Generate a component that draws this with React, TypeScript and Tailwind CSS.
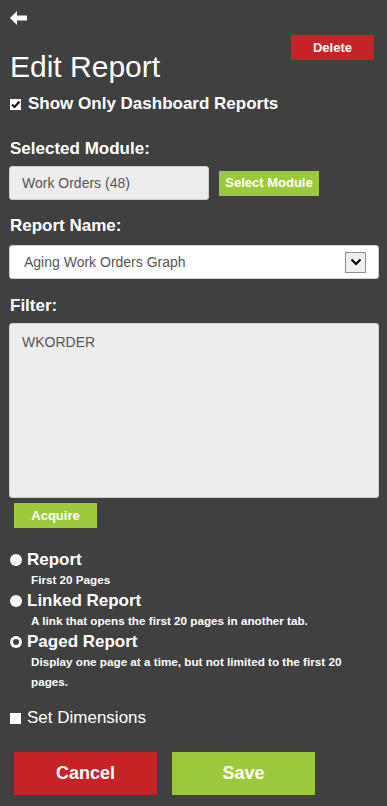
import React from "react";

const font = { fontFamily: '"Liberation Sans", Arial, sans-serif' };

const Check = ({ checked }: { checked?: boolean }) => (
  <span className="flex h-[11px] w-[11px] shrink-0 items-center justify-center bg-white">
    {checked && (
      <svg viewBox="0 0 11 11" className="h-[11px] w-[11px]">
        <path d="M2 5.5 L4.5 8 L9.5 2.5" fill="none" stroke="#111" strokeWidth="2" />
      </svg>
    )}
  </span>
);

const Radio = ({ hollow }: { hollow?: boolean }) => (
  <span className="flex h-[12px] w-[12px] shrink-0 items-center justify-center rounded-full bg-white">
    {hollow && <span className="h-[6px] w-[6px] rounded-full bg-[#404040]" />}
  </span>
);

const options = [
  { label: "Report", desc: "First 20 Pages" },
  { label: "Linked Report", desc: "A link that opens the first 20 pages in another tab." },
  { label: "Paged Report", desc: "Display one page at a time, but not limited to the first 20 pages.", hollow: true },
];

export default function App() {
  return (
    <div style={font} className="min-h-[806px] w-full bg-[#404040] pl-[9px] pr-[8px] text-white">
      <div className="pl-[1px] pt-[11px]">
        <svg viewBox="0 0 18 14" className="h-[14px] w-[18px]">
          <path d="M0 7 L7 0 L7 4.5 L17 4.5 L17 9.5 L7 9.5 L7 14 Z" fill="#fff" />
        </svg>
      </div>

      <div className="mt-[10px] flex items-start justify-between pl-[1px] pr-[5px]">
        <h1 className="mt-[15px] text-[30px] leading-[34px] font-normal">Edit Report</h1>
        <button className="h-[25px] w-[83px] bg-[#c62326] text-[13px] font-bold">Delete</button>
      </div>

      <label className="mt-[11px] flex items-center gap-[7px] pl-[1px]">
        <Check checked />
        <span className="text-[17px] leading-[18px] font-bold">Show Only Dashboard Reports</span>
      </label>

      <div className="mt-[27px] pl-[1px] text-[17px] leading-[18px] font-bold">Selected Module:</div>
      <div className="mt-[8px] flex items-center gap-[10px]">
        <div className="flex h-[34px] w-[200px] items-center rounded-[3px] border border-[#cfcfcf] bg-[#ededed] pl-[12px] text-[14px] text-[#555]">
          Work Orders (48)
        </div>
        <button className="h-[25px] w-[100px] bg-[#9aca3c] text-[13px] font-bold">Select Module</button>
      </div>

      <div className="mt-[17px] pl-[1px] text-[17px] leading-[18px] font-bold">Report Name:</div>
      <div className="mt-[10px] flex h-[34px] items-center justify-between rounded-[3px] border border-[#cfcfcf] bg-white pl-[14px] pr-[12px] text-[14px] text-[#555]">
        <span>Aging Work Orders Graph</span>
        <span className="flex h-[21px] w-[21px] items-center justify-center border border-[#8f8f8f] bg-[#f0f0f0]">
          <svg viewBox="0 0 12 8" className="h-[8px] w-[12px]">
            <path d="M1.5 1.5 L6 6 L10.5 1.5" fill="none" stroke="#000" strokeWidth="2" />
          </svg>
        </span>
      </div>

      <div className="mt-[18px] pl-[1px] text-[17px] leading-[18px] font-bold">Filter:</div>
      <div className="mt-[8px] h-[175px] rounded-[3px] border border-[#cfcfcf] bg-[#ededed] pl-[12px] pt-[8px] text-[14px] text-[#555]">
        WKORDER
      </div>
      <button className="ml-[5px] mt-[5px] h-[25px] w-[83px] bg-[#9aca3c] text-[13px] font-bold">Acquire</button>

      <div className="mt-[22px] flex flex-col pl-[1px]">
        {options.map((o) => (
          <div key={o.label} className="mb-[1px]">
            <div className="flex items-center gap-[5px]">
              <Radio hollow={o.hollow} />
              <span className="text-[17px] leading-[20px] font-bold">{o.label}</span>
            </div>
            <div className="pl-[21px] pr-[30px] text-[11.7px] leading-[20px] font-bold">{o.desc}</div>
          </div>
        ))}
      </div>

      <label className="mt-[15px] flex items-center gap-[6px] pl-[1px]">
        <Check />
        <span className="text-[17px] leading-[20px]">Set Dimensions</span>
      </label>

      <div className="mt-[24px] flex gap-[15px] pl-[5px]">
        <button className="h-[43px] w-[143px] bg-[#c62326] text-[18px] font-bold">Cancel</button>
        <button className="h-[43px] w-[143px] bg-[#9aca3c] text-[18px] font-bold">Save</button>
      </div>
    </div>
  );
}
